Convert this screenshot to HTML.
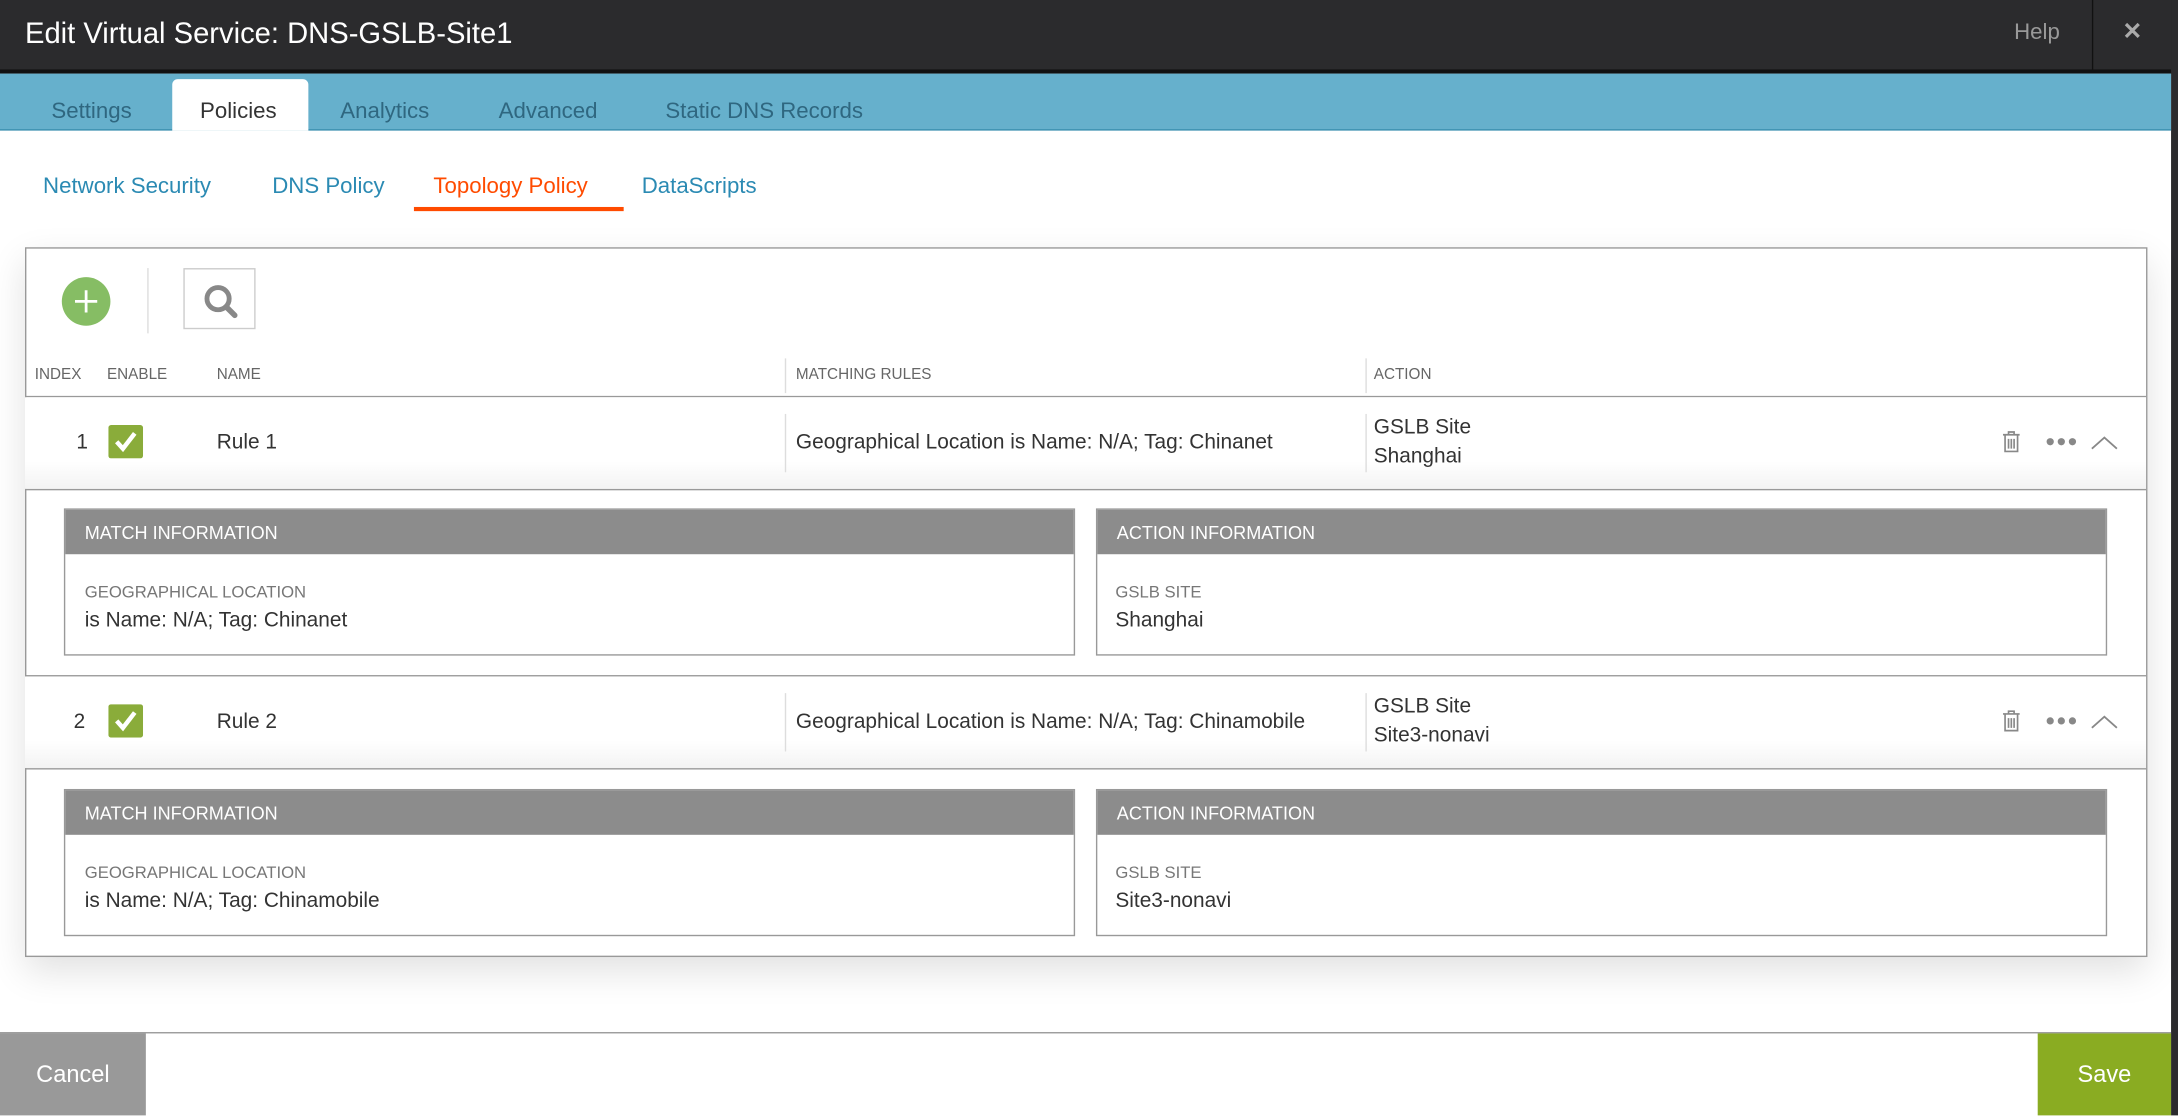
<!DOCTYPE html>
<html><head><meta charset="utf-8">
<style>
html,body{margin:0;padding:0;width:2178px;height:1116px;overflow:hidden;background:#fff}
#w{position:absolute;left:0;top:0;width:1568px;height:803px;transform:scale(1.38903);transform-origin:0 0;font-family:"Liberation Sans",sans-serif;background:#fff}
.a{position:absolute;white-space:nowrap}
.hdr{left:0;top:0;width:1568px;height:50px;background:#2b2b2d;border-bottom:3px solid #111}
.tabs{left:0;top:53px;width:1563px;height:40px;background:#66b0cc;border-bottom:1px solid #3a8fae}
.tab{top:72px;font-size:16px;color:#2f6780}
.sub{top:126px;font-size:16px;color:#2b8ab3}
.th{top:264px;font-size:11px;color:#666}
.t{font-size:15px;color:#333}
.vs{width:1px;background:#ddd}
.pnl{border:1px solid #999;background:#fff}
.ph{height:32px;background:#8c8c8c;color:#fff;font-size:13px;line-height:33px;padding-left:14px}
.lbl{font-size:12px;color:#777}
.val{font-size:15px;color:#333}
</style></head><body><div id="w">
<div class="a hdr"></div>
<div class="a" style="left:18px;top:13px;font-size:21px;color:#fff">Edit Virtual Service: DNS-GSLB-Site1</div>
<div class="a" style="left:1450px;top:15px;font-size:16px;color:#999">Help</div>
<div class="a" style="left:1506px;top:0;width:1px;height:50px;background:#111"></div>
<div class="a" style="left:1528px;top:13px;font-size:17px;color:#aaa;font-weight:bold">✕</div>
<div class="a" style="left:1563px;top:0;width:5px;height:803px;background:#2b2b2d"></div>
<div class="a tabs"></div>
<div class="a" style="left:124px;top:57px;width:98px;height:37px;background:#fff;border-radius:4px 4px 0 0"></div>
<div class="a tab" style="left:37px">Settings</div>
<div class="a tab" style="left:144px;color:#333">Policies</div>
<div class="a tab" style="left:245px">Analytics</div>
<div class="a tab" style="left:359px">Advanced</div>
<div class="a tab" style="left:479px">Static DNS Records</div>
<div class="a sub" style="left:31px">Network Security</div>
<div class="a sub" style="left:196px">DNS Policy</div>
<div class="a sub" style="left:312px;color:#ff4b00">Topology Policy</div>
<div class="a" style="left:298px;top:149px;width:151px;height:3px;background:#ff4b00"></div>
<div class="a sub" style="left:462px">DataScripts</div>

<div class="a" style="left:18px;top:178px;width:1526px;height:509px;border:1px solid #999;box-shadow:0 10px 25px rgba(0,0,0,.12)"></div>
<svg class="a" style="left:44px;top:199px" width="36" height="36"><circle cx="18" cy="18" r="17.5" fill="#86bd64"/><path d="M18 10v16M10 18h16" stroke="#fff" stroke-width="2"/></svg>
<div class="a vs" style="left:106px;top:193px;height:47px"></div>
<div class="a" style="left:132px;top:193px;width:52px;height:44px;border:1px solid #ccc;box-sizing:border-box"></div>
<svg class="a" style="left:144px;top:203px" width="30" height="28"><circle cx="13" cy="12" r="8" fill="none" stroke="#888" stroke-width="3.5"/><path d="M19 18l6 6" stroke="#888" stroke-width="4" stroke-linecap="round"/></svg>
<div class="a th" style="left:25px">INDEX</div>
<div class="a th" style="left:77px">ENABLE</div>
<div class="a th" style="left:156px">NAME</div>
<div class="a vs" style="left:565px;top:258px;height:25px"></div>
<div class="a th" style="left:573px">MATCHING RULES</div>
<div class="a vs" style="left:983px;top:258px;height:25px"></div>
<div class="a th" style="left:989px">ACTION</div>
<div class="a" style="left:18px;top:285px;width:1527px;height:1px;background:#999"></div>

<!-- row 1 -->
<div class="a" style="left:18px;top:286px;width:1527px;height:66px;background:linear-gradient(#fff 70%,#f3f3f3)"></div>
<div class="a t" style="left:55px;top:310px">1</div>
<svg class="a" style="left:78px;top:306px" width="25" height="24"><rect width="25" height="24" rx="2" fill="#8aac3a"/><path d="M6 12l4.5 5L19 6" stroke="#fff" stroke-width="3.2" fill="none"/></svg>
<div class="a t" style="left:156px;top:310px">Rule 1</div>
<div class="a vs" style="left:565px;top:298px;height:42px"></div>
<div class="a t" style="left:573px;top:310px">Geographical Location is Name: N/A; Tag: Chinanet</div>
<div class="a vs" style="left:983px;top:298px;height:42px"></div>
<div class="a t" style="left:989px;top:299px">GSLB Site</div>
<div class="a t" style="left:989px;top:320px">Shanghai</div>
<svg class="a" style="left:1438px;top:308px" width="90" height="20"><g fill="none" stroke="#888" stroke-width="1.2"><path d="M4 5h12M8 5V3h4v2M5.5 5v12h9V5M8 8v7M10 8v7M12 8v7"/><path d="M68 15l9-8 9 8" stroke-width="1.3"/></g><g fill="#888"><circle cx="38" cy="10" r="2.6"/><circle cx="46" cy="10" r="2.6"/><circle cx="54" cy="10" r="2.6"/></g></svg>
<div class="a" style="left:18px;top:352px;width:1527px;height:1px;background:#999"></div>
<div class="a pnl" style="left:46px;top:366px;width:726px;height:104px"><div class="ph">MATCH INFORMATION</div>
<div class="a lbl" style="left:14px;top:52px">GEOGRAPHICAL LOCATION</div><div class="a val" style="left:14px;top:71px">is Name: N/A; Tag: Chinanet</div></div>
<div class="a pnl" style="left:789px;top:366px;width:726px;height:104px"><div class="ph">ACTION INFORMATION</div>
<div class="a lbl" style="left:13px;top:52px">GSLB SITE</div><div class="a val" style="left:13px;top:71px">Shanghai</div></div>
<div class="a" style="left:18px;top:486px;width:1527px;height:1px;background:#999"></div>

<!-- row 2 -->
<div class="a" style="left:18px;top:487px;width:1527px;height:66px;background:linear-gradient(#fff 70%,#f3f3f3)"></div>
<div class="a t" style="left:53px;top:511px">2</div>
<svg class="a" style="left:78px;top:507px" width="25" height="24"><rect width="25" height="24" rx="2" fill="#8aac3a"/><path d="M6 12l4.5 5L19 6" stroke="#fff" stroke-width="3.2" fill="none"/></svg>
<div class="a t" style="left:156px;top:511px">Rule 2</div>
<div class="a vs" style="left:565px;top:499px;height:42px"></div>
<div class="a t" style="left:573px;top:511px;width:408px;overflow:hidden">Geographical Location is Name: N/A; Tag: Chinamobile</div>
<div class="a vs" style="left:983px;top:499px;height:42px"></div>
<div class="a t" style="left:989px;top:500px">GSLB Site</div>
<div class="a t" style="left:989px;top:521px">Site3-nonavi</div>
<svg class="a" style="left:1438px;top:509px" width="90" height="20"><g fill="none" stroke="#888" stroke-width="1.2"><path d="M4 5h12M8 5V3h4v2M5.5 5v12h9V5M8 8v7M10 8v7M12 8v7"/><path d="M68 15l9-8 9 8" stroke-width="1.3"/></g><g fill="#888"><circle cx="38" cy="10" r="2.6"/><circle cx="46" cy="10" r="2.6"/><circle cx="54" cy="10" r="2.6"/></g></svg>
<div class="a" style="left:18px;top:553px;width:1527px;height:1px;background:#999"></div>
<div class="a pnl" style="left:46px;top:568px;width:726px;height:104px"><div class="ph">MATCH INFORMATION</div>
<div class="a lbl" style="left:14px;top:52px">GEOGRAPHICAL LOCATION</div><div class="a val" style="left:14px;top:71px">is Name: N/A; Tag: Chinamobile</div></div>
<div class="a pnl" style="left:789px;top:568px;width:726px;height:104px"><div class="ph">ACTION INFORMATION</div>
<div class="a lbl" style="left:13px;top:52px">GSLB SITE</div><div class="a val" style="left:13px;top:71px">Site3-nonavi</div></div>

<!-- footer -->
<div class="a" style="left:0;top:743px;width:1563px;height:1px;background:#999"></div>
<div class="a" style="left:0;top:744px;width:105px;height:59px;background:#999;color:#fff;font-size:17px;line-height:60px;text-align:center">Cancel</div>
<div class="a" style="left:1467px;top:744px;width:96px;height:59px;background:#8aac22;color:#fff;font-size:17px;line-height:60px;text-align:center">Save</div>
</div></body></html>
